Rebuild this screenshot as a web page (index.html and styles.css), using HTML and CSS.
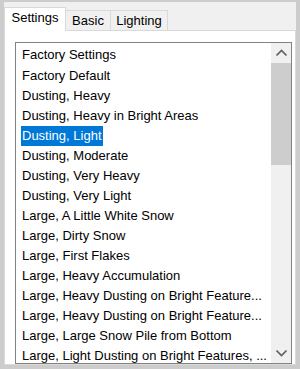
FILE: index.html
```html
<!DOCTYPE html>
<html>
<head>
<meta charset="utf-8">
<link rel="stylesheet" href="styles.css">
</head>
<body>
<div class="window">
  <div class="tabs">
    <div class="tab active tab-settings">Settings</div>
    <div class="tab tab-basic">Basic</div>
    <div class="tab tab-lighting">Lighting</div>
  </div>
  <div class="panel">
    <div class="listbox">
      <div class="list">
        <div class="item first"><span>Factory Settings</span></div>
        <div class="item"><span>Factory Default</span></div>
        <div class="item"><span>Dusting, Heavy</span></div>
        <div class="item"><span>Dusting, Heavy in Bright Areas</span></div>
        <div class="item selected"><span>Dusting, Light</span></div>
        <div class="item"><span>Dusting, Moderate</span></div>
        <div class="item"><span>Dusting, Very Heavy</span></div>
        <div class="item"><span>Dusting, Very Light</span></div>
        <div class="item"><span>Large, A Little White Snow</span></div>
        <div class="item"><span>Large, Dirty Snow</span></div>
        <div class="item"><span>Large, First Flakes</span></div>
        <div class="item"><span>Large, Heavy Accumulation</span></div>
        <div class="item"><span>Large, Heavy Dusting on Bright Feature...</span></div>
        <div class="item"><span>Large, Heavy Dusting on Bright Feature...</span></div>
        <div class="item"><span>Large, Large Snow Pile from Bottom</span></div>
        <div class="item"><span>Large, Light Dusting on Bright Features, ...</span></div>
      </div>
      <div class="scrollbar">
        <div class="sb-btn">
          <svg width="20" height="20" viewBox="0 0 20 20"><polyline points="5.5,12.5 10.5,7.5 15.5,12.5" fill="none" stroke="#606060" stroke-width="1.7"/></svg>
        </div>
        <div class="sb-thumb"></div>
        <div class="sb-track"></div>
        <div class="sb-btn">
          <svg width="20" height="20" viewBox="0 0 20 20"><polyline points="5.5,7.5 10.5,12.5 15.5,7.5" fill="none" stroke="#606060" stroke-width="1.7"/></svg>
        </div>
      </div>
    </div>
  </div>
</div>
</body>
</html>
```
FILE: styles.css
```css
html, body {
  margin: 0;
  padding: 0;
}
body {
  background: #cccccc;
  width: 300px;
  height: 369px;
  overflow: hidden;
  font-family: "Liberation Sans", Arial, sans-serif;
  font-size: 13px;
  color: #000;
}
.window {
  margin: 2px 0 0 4px;
  width: 292px;
  background: #f0f0f0;
  display: flex;
  flex-direction: column;
}
.tabs {
  display: flex;
  align-items: flex-end;
  height: 28px;
}
.tab {
  box-sizing: border-box;
  height: 20px;
  border: 1px solid #d9d9d9;
  border-bottom: none;
  background: #f0f0f0;
  line-height: 19px;
  text-align: center;
  white-space: nowrap;
}
.tab + .tab {
  margin-left: -1px;
}
.tab.active {
  position: relative;
  z-index: 1;
  height: 24px;
  margin-bottom: -1px;
  background: #fff;
  line-height: 20px;
  padding-bottom: 3px;
}
.tab-settings { width: 62px; }
.tab-basic { width: 46px; }
.tab-lighting { width: 58px; }
.panel {
  background: #fff;
  border: 1px solid #d9d9d9;
  padding: 11px 3px 0 10px;
}
.listbox {
  box-sizing: border-box;
  height: 322px;
  border: 1px solid #828282;
  display: flex;
  background: #fff;
}
.list {
  flex: 1;
  overflow: hidden;
  padding-top: 2px;
}
.item {
  height: 20px;
  line-height: 20px;
  padding-left: 5px;
  white-space: nowrap;
}
.item.first {
  height: 21px;
}
.item span {
  display: inline-block;
  padding: 0 1px;
}
.item.selected span {
  background: #0078d7;
  color: #fff;
}
.scrollbar {
  width: 20px;
  display: flex;
  flex-direction: column;
  background: #f0f0f0;
}
.sb-btn {
  height: 20px;
  display: flex;
  align-items: center;
  justify-content: center;
}
.sb-btn svg {
  display: block;
}
.sb-thumb {
  height: 102px;
  background: #cdcdcd;
}
.sb-track {
  flex: 1;
}
```
